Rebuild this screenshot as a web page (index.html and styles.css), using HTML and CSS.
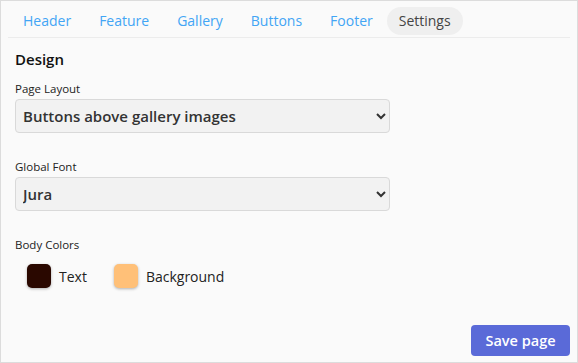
FILE: index.html
```html
<!DOCTYPE html>
<html lang="en">
<head>
    <meta charset="UTF-8">
    <meta name="viewport" content="width=device-width, initial-scale=1.0">
    <title>Settings</title>
    <link rel="stylesheet" href="styles.css">
</head>
<body>
    <div class="panel">
        <nav class="tabs">
            <a class="tab" href="#">Header</a>
            <a class="tab" href="#">Feature</a>
            <a class="tab" href="#">Gallery</a>
            <a class="tab" href="#">Buttons</a>
            <a class="tab" href="#">Footer</a>
            <a class="tab active" href="#">Settings</a>
        </nav>

        <div class="content">
            <h2>Design</h2>

            <div class="field">
                <label for="layout">Page Layout</label>
                <select id="layout">
                    <option>Buttons above gallery images</option>
                </select>
            </div>

            <div class="field">
                <label for="font">Global Font</label>
                <select id="font">
                    <option>Jura</option>
                </select>
            </div>

            <div class="field">
                <label>Body Colors</label>
                <div class="colors">
                    <div class="color-item">
                        <span class="swatch swatch-text"></span> Text
                    </div>
                    <div class="color-item">
                        <span class="swatch swatch-bg"></span> Background
                    </div>
                </div>
            </div>
        </div>

        <div class="footer">
            <button class="save">Save page</button>
        </div>
    </div>
</body>
</html>
```

FILE: styles.css
```css
body {
    margin: 0;
    font-family: "Open Sans", Arial, sans-serif;
    color: #222;
}
.panel {
    width: 578px;
    height: 363px;
    box-sizing: border-box;
    border: 1px solid #dcdcdc;
    background-color: #fafafa;
    padding: 0 7px;
    display: flex;
    flex-direction: column;
}
.tabs {
    display: flex;
    gap: 0;
    padding: 6px 0 2px 1px;
    border-bottom: 1px solid #ececec;
}
.tab {
    font-size: 14px;
    color: #42a5f5;
    text-decoration: none;
    padding: 5px 14px;
    line-height: 18px;
    border-radius: 15px;
}
.tab.active {
    color: #444;
    background-color: #efefef;
    padding: 5px 12px;
}
.content {
    padding: 0 7px;
    flex: 1;
}
h2 {
    font-size: 15px;
    font-weight: 600;
    color: #111;
    margin: 11px 0 12px 0;
}
.field {
    margin-bottom: 26px;
}
label {
    display: block;
    font-size: 11.5px;
    color: #222;
    margin-bottom: 3px;
}
select {
    width: 375px;
    height: 34px;
    padding: 0 3px;
    font-family: "Open Sans", Arial, sans-serif;
    font-size: 15px;
    font-weight: 600;
    color: #333;
    background-color: #f2f2f2;
    border: 1px solid #d9d9d9;
    border-radius: 4px;
}
.colors {
    display: flex;
    gap: 27px;
    padding: 9px 0 0 12px;
}
.color-item {
    display: flex;
    align-items: center;
    gap: 8px;
    font-size: 14px;
    color: #222;
}
.swatch {
    width: 24px;
    height: 24px;
    border-radius: 5px;
    box-shadow: 0 1px 3px rgba(0, 0, 0, 0.3);
}
.swatch-text {
    background-color: #2a0800;
}
.swatch-bg {
    background-color: #ffc078;
}
.footer {
    display: flex;
    justify-content: flex-end;
    padding-bottom: 6px;
}
.save {
    background-color: #5a6ad8;
    color: #fff;
    border: none;
    border-radius: 4px;
    font-family: "Open Sans", Arial, sans-serif;
    font-size: 14.5px;
    font-weight: 600;
    width: 99px;
    height: 31px;
}
```
